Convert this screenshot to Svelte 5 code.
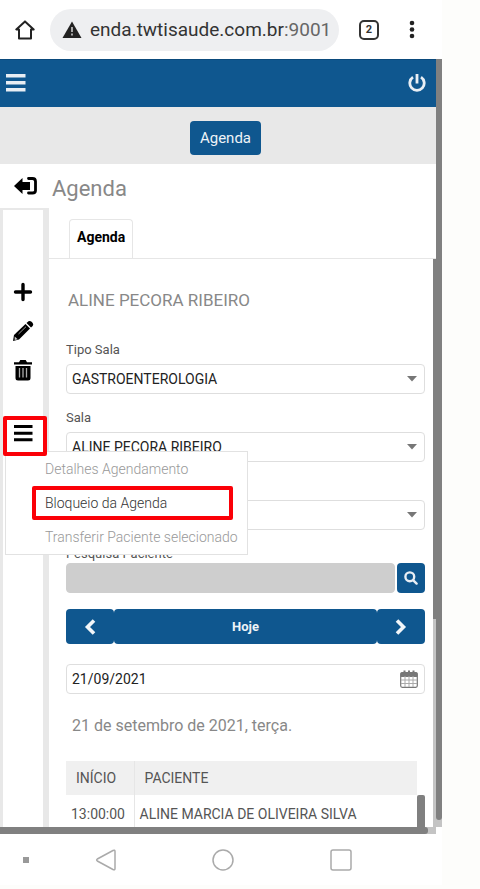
<script lang="ts">
    interface Field {
        id: string,
        label: string,
        value: string,
    }

    interface MenuItem {
        text: string,
        disabled: boolean,
    }

    const fields: Field[] = [
        { id: "tipo-sala", label: "Tipo Sala", value: "GASTROENTEROLOGIA" },
        { id: "sala", label: "Sala", value: "ALINE PECORA RIBEIRO" },
        { id: "filtro", label: "", value: "" },
    ];

    const menuItems: MenuItem[] = [
        { text: "Detalhes Agendamento", disabled: true },
        { text: "Bloqueio da Agenda", disabled: false },
        { text: "Transferir Paciente selecionado", disabled: true },
    ];

    const rows = [{ inicio: "13:00:00", paciente: "ALINE MARCIA DE OLIVEIRA SILVA" }];

    let menuOpen = $state<boolean>(true);
    let search = $state<string>("");
    let date = $state<string>("21/09/2021");
</script>

<div class="phone">
    <div class="browser">
        <button class="icon" aria-label="Home">
            <svg width="20" height="20" viewBox="0 0 20 20" fill="none" stroke="#222" stroke-width="2" stroke-linejoin="round"><path d="M10 1.4 1.3 9.4H4V18.4H16V9.4h2.700Z" /></svg>
        </button>
        <div class="address">
            <svg width="20" height="18" viewBox="0 0 20 18"><path d="M10 0.500 19.500 17H.5Z" fill="#222" /><path d="M10 6v5M10 12.500v2" stroke="#aaa" stroke-width="2" /></svg>
            <span class="url">enda.twtisaude.com.br<span class="port">:9001</span></span>
        </div>
        <button class="tabcount">2</button>
        <button class="icon" aria-label="Mais">
            <svg width="6" height="20" viewBox="0 0 6 20" fill="#222"><circle cx="3" cy="3" r="2.300" /><circle cx="3" cy="9.500" r="2.300" /><circle cx="3" cy="16" r="2.300" /></svg>
        </button>
    </div>

    <div class="web">
        <div class="screen">
            <header class="topbar">
                <button class="icon" aria-label="Menu">
                    <svg width="20" height="20" viewBox="0 0 20 20" fill="#e8eef4"><path d="M0 0h19.500v3.500H0zM0 7h19.500v3.500H0zM0 14h19.500v3.500H0z" /></svg>
                </button>
                <button class="icon" aria-label="Sair">
                    <svg width="18" height="20" viewBox="0 0 18 20" fill="none" stroke="#e8eef4" stroke-width="2.800"><path d="M5 3.200A7.200 7.200 0 1 0 13 3.200M9 0V9.500" /></svg>
                </button>
            </header>
            <div class="subbar">
                <button class="primary">Agenda</button>
            </div>
            <div class="title">
                <button class="icon" aria-label="Voltar">
                    <svg width="24" height="20" viewBox="0 0 24 20"><path d="M0 10 8.500 2V6H16V14H8.500V18Z" /><path d="M14.500 2.500H18.500Q21.500 2.500 21.500 5.500V14.500Q21.500 17 18.500 17H14.500" fill="none" stroke="#000" stroke-width="2.800" stroke-linecap="round" /></svg>
                </button>
                <h1>Agenda</h1>
            </div>

            <div class="body">
                <aside class="tools">
                    <button class="icon" aria-label="Adicionar">
                        <svg width="20" height="20" viewBox="0 0 20 20" fill="none" stroke="#000" stroke-width="3.400" stroke-linecap="round"><path d="M10 2.500V17.500M2.500 10H17.500" /></svg>
                    </button>
                    <button class="icon" aria-label="Editar">
                        <svg width="22" height="22" viewBox="0 0 22 22"><path d="M1 21 2 15 13.500 4 18 8.500 7 19.500Z" /><path d="M14.500 3 16.500 1.300Q18 .4 19.600 1.800L20.700 3Q21.800 4.500 20.700 6L19 7.500Z" /><path d="m6.500 14 7.500-7.300" stroke="#999" fill="none" /><path d="m2.700 16.500 3 2.700-3 .7Z" fill="#ccc" /></svg>
                    </button>
                    <button class="icon" aria-label="Excluir">
                        <svg width="20" height="22" viewBox="0 0 20 22"><path d="M1 2.300h5L7.300 0h5.400L14 2.300h5V4.500H1zM2.500 6h15V18q0 2.500-2.500 2.500H5Q2.500 20.500 2.500 18Z" /><path d="M6.500 8V17.500M10 8V17.500M13.500 8V17.500" stroke="#aaa" stroke-width="1.300" /></svg>
                    </button>
                    <div class="more">
                        <button class="more-button" aria-label="Opções" aria-expanded={menuOpen} onclick={() => menuOpen = !menuOpen}>
                            <svg width="20" height="17" viewBox="0 0 20 17"><path d="M0 0h18.500v3H0zM0 6.700h18.500v3H0zM0 13.300h18.500v3H0z" /></svg>
                        </button>
                        {#if menuOpen}
                            <div class="menu">
                                {#each menuItems as item}
                                    <button class="menu-item" class:marked={!item.disabled} disabled={item.disabled}>{item.text}</button>
                                {/each}
                            </div>
                        {/if}
                    </div>
                </aside>

                <main class="content">
                    <nav class="tabs">
                        <button class="tab">Agenda</button>
                    </nav>
                    <div class="panel">
                        <div class="form">
                            <h2>ALINE PECORA RIBEIRO</h2>
                            <div class="fields">
                                {#each fields as field}
                                    <div class="field">
                                        <label for={field.id}>{field.label}</label>
                                        <div class="select">
                                            <select id={field.id}>
                                                <option>{field.value}</option>
                                            </select>
                                            <svg width="12" height="6" viewBox="0 0 12 6"><path d="M1 0h10L6 5.500Z" fill="#777" /></svg>
                                        </div>
                                    </div>
                                {/each}
                                <div class="field tight">
                                    <label for="pesquisa">Pesquisa Paciente</label>
                                    <div class="search">
                                        <input id="pesquisa" type="text" bind:value={search} />
                                        <button class="primary" aria-label="Pesquisar">
                                            <svg width="14" height="14" viewBox="0 0 14 14" fill="none" stroke="#e8eef4" stroke-width="2.400" stroke-linecap="round"><circle cx="5.800" cy="5.800" r="4.400" /><path d="m9.300 9.300 3.300 3.300" /></svg>
                                        </button>
                                    </div>
                                </div>
                            </div>

                            <div class="days">
                                <button class="primary" aria-label="Anterior">
                                    <svg width="12" height="16" viewBox="0 0 12 16" fill="none" stroke="#f2f6f9" stroke-width="3.600"><path d="M10 1.500 3.500 8 10 14.500" /></svg>
                                </button>
                                <button class="primary today">Hoje</button>
                                <button class="primary" aria-label="Próximo">
                                    <svg width="12" height="16" viewBox="0 0 12 16" fill="none" stroke="#f2f6f9" stroke-width="3.600"><path d="M2 1.500 8.500 8 2 14.500" /></svg>
                                </button>
                            </div>

                            <div class="date">
                                <input type="text" aria-label="Data" bind:value={date} />
                                <svg width="18" height="18" viewBox="0 0 18 18" fill="none" stroke="#777"><rect x=".7" y="2.700" width="16.600" height="14.600" rx="1.500" fill="#fff" stroke-width="1.200" /><path d="M1 3h16v3.500H1z" fill="#777" /><path d="M4.500 .5V4M9 .5V4M13.500 .5V4" stroke-width="2" /><path d="M1 10h16M1 13.500h16M5 6v11M9 6v11M13 6v11" stroke="#aaa" /></svg>
                            </div>

                            <p class="day">21 de setembro de 2021, terça.</p>

                            <div class="grid">
                                <table>
                                    <thead>
                                        <tr><th>INÍCIO</th><th>PACIENTE</th></tr>
                                    </thead>
                                    <tbody>
                                        {#each rows as row}
                                            <tr><td>{row.inicio}</td><td>{row.paciente}</td></tr>
                                        {/each}
                                    </tbody>
                                </table>
                                <div class="grid-thumb"></div>
                            </div>
                        </div>
                        <div class="panel-track"><div class="panel-thumb"></div></div>
                    </div>
                </main>
            </div>
            <div class="bottom-track"><div class="bottom-thumb"></div></div>
        </div>
        <div class="page-track"><div class="page-thumb"></div></div>
    </div>

    <div class="android">
        <span class="dot"></span>
        <button class="icon" aria-label="Voltar">
            <svg width="22" height="22" viewBox="0 0 22 22" fill="none" stroke="#aaa" stroke-width="1.500" stroke-linejoin="round"><path d="M18 1.500Q20 .5 20 2.500V19.500Q20 21.500 18 20.500L2.300 12Q1 11 2.300 10Z" /></svg>
        </button>
        <button class="icon" aria-label="Início">
            <svg width="22" height="22" viewBox="0 0 22 22" fill="none" stroke="#aaa" stroke-width="1.500"><circle cx="11" cy="11" r="10" /></svg>
        </button>
        <button class="icon" aria-label="Recentes">
            <svg width="22" height="22" viewBox="0 0 22 22" fill="none" stroke="#aaa" stroke-width="1.500"><rect x="1" y="1" width="20" height="20" rx="2" /></svg>
        </button>
    </div>
</div>

<style>
    :global(body) {
        background: #fdfdfb;
        font-family: Roboto, "Liberation Sans", sans-serif;
    }

    .phone {
        --blue: #0f578f;
        --thumb: #808080;
        --track: #c4c4c4;
        --line: #e6e6e6;
        margin-right: 38px;
        background: #fff;
    }

    .phone * {
        box-sizing: border-box;
    }

    button,
    input,
    select {
        font-family: inherit;
        margin: 0;
    }

    button {
        display: flex;
        align-items: center;
        justify-content: center;
        padding: 0;
        border: none;
        background: none;
        color: #000;
    }

    svg {
        display: block;
    }

    .browser {
        display: flex;
        align-items: center;
        height: 59px;
        padding: 0 27px 0 15px;
    }

    .address {
        display: flex;
        align-items: center;
        flex: 1;
        gap: 8px;
        height: 42px;
        margin: 0 20px 0 15px;
        padding-left: 12px;
        border-radius: 21px;
        background: #eeeff1;
    }

    .url {
        font-size: 19px;
        color: #333;
        white-space: nowrap;
    }

    .port {
        color: #666;
    }

    .tabcount {
        width: 20px;
        height: 20px;
        margin-right: 30px;
        border: 2px solid #333;
        border-radius: 5px;
        font-size: 11px;
        font-weight: 700;
        color: #333;
    }

    .web {
        display: flex;
    }

    .screen {
        flex: 1;
        min-width: 0;
    }

    .topbar {
        display: flex;
        align-items: center;
        justify-content: space-between;
        height: 48px;
        padding: 0 10px 0 6px;
        border-top: 1px solid #0b4a7c;
        background: var(--blue);
    }

    .subbar {
        display: flex;
        align-items: center;
        justify-content: center;
        height: 57px;
        padding: 4px 0 0 15px;
        background: #e8e8e8;
    }

    .primary {
        border-radius: 4px;
        background: var(--blue);
        color: #eef3f7;
    }

    .subbar .primary {
        height: 34px;
        padding: 0 10px;
        font-size: 15px;
    }

    .title {
        display: flex;
        align-items: center;
        gap: 14px;
        height: 44px;
        padding-left: 14px;
    }

    h1 {
        margin: 0;
        padding-top: 4px;
        font-size: 22px;
        font-weight: 400;
        color: #888;
    }

    .body {
        display: flex;
    }

    .tools {
        display: flex;
        flex-direction: column;
        align-items: center;
        gap: 18px;
        width: 49px;
        padding-top: 72px;
        border: solid #e8e8e8;
        border-width: 2px 6px 0 3px;
    }

    .more {
        position: relative;
        margin: 16px 0 0 4px;
    }

    .more-button {
        position: relative;
        z-index: 2;
        width: 44px;
        height: 40px;
        padding: 0 2px 6px 0;
        border: 4px solid #fb0007;
        border-radius: 2px;
        background: #fff;
    }

    .menu {
        position: absolute;
        z-index: 1;
        top: 35px;
        left: 2px;
        display: flex;
        flex-direction: column;
        width: 243px;
        padding: 0 14px 0 26px;
        border: 1px solid #e2e2e2;
        background: #fff;
    }

    .menu-item {
        justify-content: flex-start;
        height: 34px;
        padding: 0 13px;
        font-size: 14px;
        font-weight: 300;
        white-space: nowrap;
        color: #333;
    }

    .menu-item:disabled {
        color: #999;
    }

    .menu-item.marked {
        padding: 0 9px;
        border: 4px solid #fb0007;
        border-radius: 2px;
    }

    .content {
        flex: 1;
        min-width: 0;
    }

    .tabs {
        display: flex;
        padding: 11px 0 0 20px;
        border-bottom: 1px solid var(--line);
    }

    .tab {
        height: 39px;
        padding: 0 7px 4px;
        border: 1px solid var(--line);
        border-bottom: none;
        border-radius: 4px 4px 0 0;
        font-size: 14px;
        font-weight: 700;
    }

    .panel {
        display: flex;
    }

    .form {
        flex: 1;
        min-width: 0;
        padding: 29px 8px 0 17px;
    }

    h2 {
        margin: 0 0 29px 2px;
        font-size: 17px;
        font-weight: 400;
        line-height: 24px;
        color: #888;
    }

    .fields {
        display: flex;
        flex-direction: column;
        gap: 15px;
    }

    .field {
        display: flex;
        flex-direction: column;
        gap: 5px;
    }

    .tight {
        gap: 0;
    }

    label {
        height: 18px;
        font-size: 13px;
        line-height: 18px;
        color: #555;
    }

    .select,
    .date {
        display: grid;
        align-items: center;
    }

    .select > *,
    .date > * {
        grid-area: 1 / 1;
    }

    .select svg,
    .date svg {
        justify-self: end;
        margin-right: 7px;
        pointer-events: none;
    }

    select,
    input {
        width: 100%;
        height: 30px;
        padding: 0 5px;
        border: 1px solid #dedede;
        border-radius: 4px;
        appearance: none;
        background: #fff;
        font-size: 14px;
        color: #222;
    }

    .search {
        display: flex;
        gap: 2px;
    }

    .search input {
        flex: 1;
        min-width: 0;
        border-color: #cecece;
        background: #cecece;
    }

    .search .primary {
        width: 28px;
        height: 30px;
    }

    .days {
        display: flex;
        margin: 16px 0 20px;
    }

    .days .primary {
        width: 48px;
        height: 35px;
        font-size: 13px;
        font-weight: 700;
    }

    .days .today {
        flex: 1;
    }

    .day {
        margin: 20px 6px 23px;
        font-size: 16px;
        line-height: 24px;
        color: #888;
    }

    .grid {
        display: flex;
        align-items: flex-end;
    }

    table {
        flex: 1;
        border-collapse: collapse;
        font-size: 14px;
        color: #555;
    }

    th {
        height: 34px;
        padding: 0 10px;
        background: #f0f0f0;
        font-weight: 400;
        text-align: left;
    }

    td {
        height: 32px;
        padding: 6px 5px 0;
        white-space: nowrap;
    }

    th:first-child,
    td:first-child {
        width: 68px;
        border-right: 1px solid var(--line);
    }

    .grid-thumb {
        width: 8px;
        height: 32px;
        border-radius: 2px 2px 0 0;
        background: var(--thumb);
    }

    .panel-track {
        width: 3px;
        background: var(--track);
    }

    .panel-thumb {
        height: 360px;
        background: var(--thumb);
    }

    .bottom-track {
        height: 7px;
        padding-right: 8px;
        background: var(--track);
    }

    .bottom-thumb {
        height: 7px;
        border-radius: 0 3px 3px 0;
        background: var(--thumb);
    }

    .page-track {
        width: 6px;
        padding-bottom: 14px;
        background: linear-gradient(#fff, #fff) bottom / 6px 7px no-repeat, var(--track);
    }

    .page-thumb {
        height: 100%;
        border-radius: 0 0 3px 3px;
        background: var(--thumb);
    }

    .android {
        display: flex;
        align-items: center;
        justify-content: space-between;
        height: 51px;
        padding: 0 90px 0 23px;
    }

    .dot {
        width: 6px;
        height: 6px;
        margin-right: -30px;
        background: #999;
    }
</style>
